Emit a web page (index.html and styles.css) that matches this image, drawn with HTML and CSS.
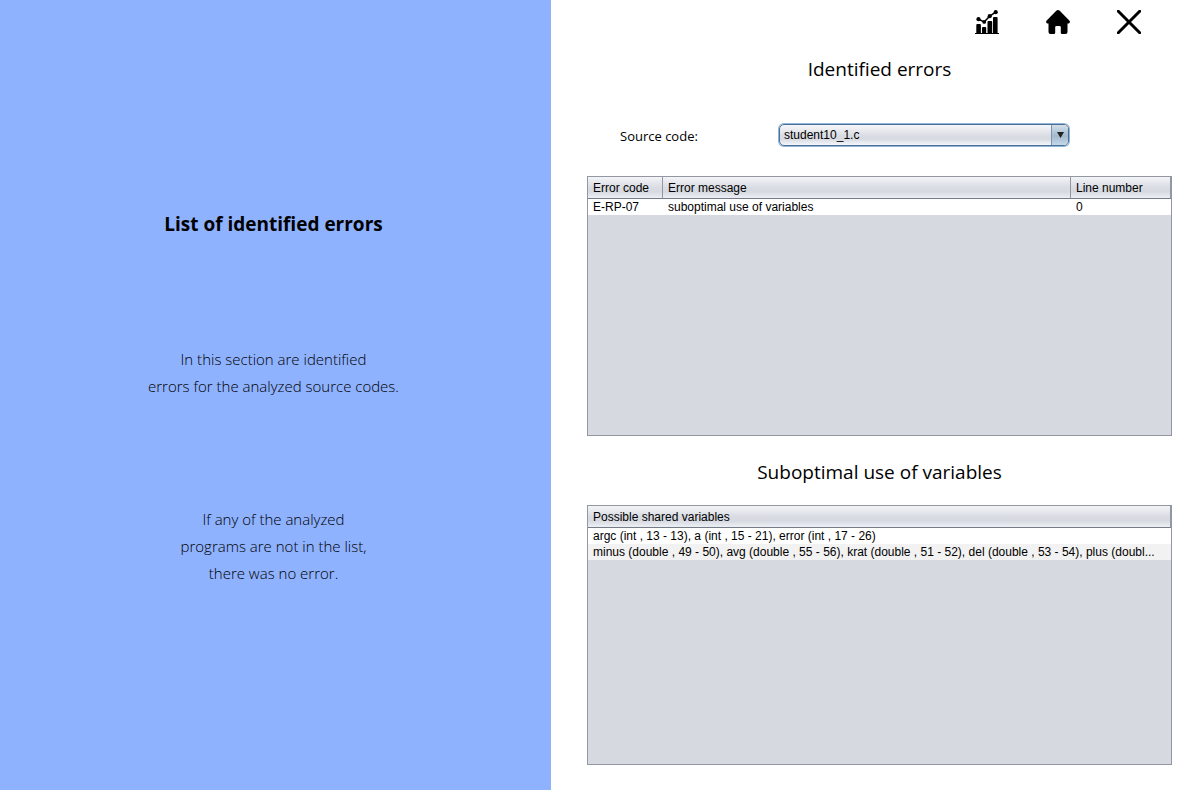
FILE: index.html
```html
<!DOCTYPE html>
<html lang="en">
<head>
<meta charset="utf-8">
<title>Identified errors</title>
<link rel="stylesheet" href="styles.css">
</head>
<body>
<div class="app">
  <aside class="intro">
    <h1 class="intro-title">List of identified errors</h1>
    <p class="intro-text">In this section are identified<br>errors for the analyzed source codes.</p>
    <p class="intro-text">If any of the analyzed<br>programs are not in the list,<br>there was no error.</p>
  </aside>
  <main class="content">
    <nav class="toolbar">
      <button class="icon-button" type="button" aria-label="Statistics">
        <svg viewBox="0 0 24 24" width="24" height="24">
          <path d="M0 23h24v1H0z"/>
          <path d="M1.300 15q0-1 1-1h2.600q1 0 1 1v8.500H1.300zM7 18q0-1 1-1h2.200q1 0 1 1v5.500H7zM12.500 12q0-1 1-1h2.700q1 0 1 1v11.500h-4.700zM18 8q0-1 1-1h2.600q1 0 1 1v15.500H18z"/>
          <path d="M3.500 9.200l5.700 2.700 5.500-5.700 6-4" fill="none" stroke="#000" stroke-width="1.500"/>
          <circle cx="3.500" cy="9.200" r="2.100"/><circle cx="9.200" cy="11.900" r="1.900"/><circle cx="14.700" cy="6.200" r="2.100"/><circle cx="20.700" cy="2.200" r="2.100"/>
        </svg>
      </button>
      <button class="icon-button" type="button" aria-label="Home">
        <svg viewBox="0 0 24 24" width="24" height="24">
          <path d="M10.500.6q1.500-1.200 3 0L23.300 10.400q1.200 1.300.2 2.500-.5.700-2 .7V22q0 2-2 2H16q-1.200 0-1.200-1.200V17.300q0-1.300-1.300-1.300h-3q-1.300 0-1.300 1.300v5.500Q9.200 24 8 24H4.500q-2 0-2-2v-8.400q-1.500 0-2-.7-1-1.200.2-2.500z"/>
        </svg>
      </button>
      <button class="icon-button" type="button" aria-label="Close">
        <svg viewBox="0 0 24 24" width="24" height="24">
          <path d="M1.300 1.300l21.400 21.400M22.700 1.300L1.300 22.700" stroke="#000" stroke-width="3" stroke-linecap="round"/>
        </svg>
      </button>
    </nav>
    <h2 class="section-title">Identified errors</h2>
    <div class="source">
      <label class="source-label" for="source">Source code:</label>
      <div class="combo">
        <select class="combo-select" id="source"><option>student10_1.c</option></select>
        <span class="combo-arrow"><svg viewBox="0 0 7 6" width="7" height="6"><path d="M0 0h7L3.500 6z" fill="#222"/></svg></span>
      </div>
    </div>
    <div class="table-pane">
      <table class="table">
        <colgroup><col class="col-code"><col><col class="col-line"></colgroup>
        <thead><tr><th>Error code</th><th>Error message</th><th>Line number</th></tr></thead>
        <tbody><tr><td>E-RP-07</td><td>suboptimal use of variables</td><td>0</td></tr></tbody>
      </table>
    </div>
    <h2 class="section-title detail-title">Suboptimal use of variables</h2>
    <div class="table-pane">
      <table class="table">
        <thead><tr><th>Possible shared variables</th></tr></thead>
        <tbody>
          <tr><td>argc (int , 13 - 13), a (int , 15 - 21), error (int , 17 - 26)</td></tr>
          <tr><td>minus (double , 49 - 50), avg (double , 55 - 56), krat (double , 51 - 52), del (double , 53 - 54), plus (doubl...</td></tr>
        </tbody>
      </table>
    </div>
  </main>
</div>
</body>
</html>
```
FILE: styles.css
```css
* { box-sizing: border-box; }
body {
  margin: 0;
  background: #fff;
  color: #000;
  font-family: "Open Sans", "Noto Sans", sans-serif;
}
h1, h2, p { margin: 0; }
.app {
  display: grid;
  grid-template-columns: 551fr 642fr;
  min-height: 100vh;
}
.intro {
  display: flex;
  flex-direction: column;
  gap: 106px;
  padding: 210px 4px 0 0;
  background: #8fb2ff;
  text-align: center;
}
.intro-title {
  margin-bottom: 2px;
  font-size: 19px;
  line-height: 28px;
  font-weight: 700;
}
.intro-text {
  font-size: 15px;
  line-height: 27px;
  font-weight: 300;
}
.content {
  display: flex;
  flex-direction: column;
  min-width: 0;
  padding: 10px 21px 25px 36px;
}
.toolbar {
  display: flex;
  justify-content: flex-end;
  gap: 47px;
  padding-right: 31px;
}
.icon-button {
  display: block;
  padding: 0;
  border: 0;
  background: none;
}
.icon-button svg { display: block; }
.section-title {
  margin-top: 20px;
  font-size: 19px;
  line-height: 30px;
  font-weight: 400;
  text-align: center;
}
.source {
  display: flex;
  align-items: flex-start;
  margin: 38px 102px 26px 33px;
}
.source-label {
  width: 158px;
  font-size: 13px;
  line-height: 28px;
}
.combo {
  position: relative;
  flex: 1;
  height: 26px;
  padding: 2px 1px;
}
.combo-select {
  display: block;
  appearance: none;
  width: 100%;
  height: 22px;
  padding: 0 24px 0 4px;
  border: 1px solid #4e6f93;
  border-radius: 5px;
  outline: 0;
  box-shadow: 0 0 0 1px #8db6d9;
  background: linear-gradient(#f6f7fa, #d9dce2 55%, #d7dae1 70%, #f3f6fa);
  color: #000;
  font: 12px/20px "Liberation Sans", Arial, sans-serif;
}
.combo-arrow {
  position: absolute;
  top: 3px;
  right: 2px;
  bottom: 3px;
  width: 17px;
  display: grid;
  place-items: center;
  border-left: 1px solid #7c96b0;
  border-radius: 0 4px 4px 0;
  background: linear-gradient(#d4e0eb, #a3b9cc 55%, #c4d9ea);
  pointer-events: none;
}
.table-pane {
  flex: 1;
  min-height: 200px;
  border: 1px solid #9297a1;
  background: #d6d9e0;
}
.table {
  width: 100%;
  border-collapse: separate;
  border-spacing: 0;
  table-layout: fixed;
  font: 12px/16px "Liberation Sans", Arial, sans-serif;
}
.col-code { width: 75px; }
.col-line { width: 100px; }
.table th, .table td {
  padding: 0 5px;
  font-weight: 400;
  text-align: left;
  white-space: nowrap;
}
.table th {
  height: 22px;
  border-right: 1px solid #9297a1;
  border-bottom: 1px solid #757b87;
  background: linear-gradient(#f3f4f7, #d9dce3 50%, #d6d9e0 70%, #eceff4);
}
.table td { height: 16px; background: #fff; }
.table tr:nth-child(even) td { background: #f2f2f2; }
.detail-title { margin: 21px 0 18px; }
```
